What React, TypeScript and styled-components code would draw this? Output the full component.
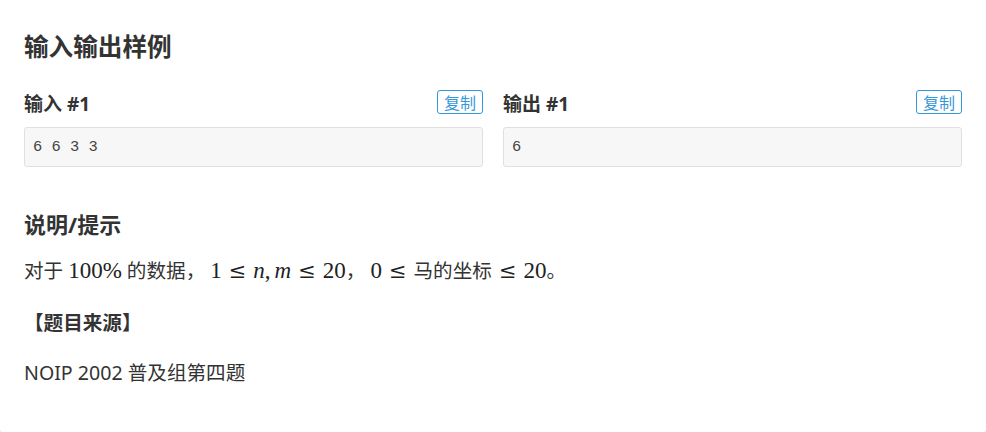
import styled, { createGlobalStyle } from "styled-components";

const GlobalStyle = createGlobalStyle`
  html, body {
    margin: 0;
    padding: 0;
    background: #efefef;
  }
  body {
    font-family: "Noto Sans", "Noto Sans CJK SC", sans-serif;
    color: #333;
  }
`;

const Card = styled.div`
  box-sizing: border-box;
  width: 986px;
  height: 432px;
  padding: 32px 24px 0;
  background: #fff;
  border-radius: 0 0 4px 4px;
`;

const Title = styled.h2`
  margin: 0;
  font-size: 24.6px;
  line-height: 30px;
  font-weight: 700;
  color: #333;
`;

const SampleGrid = styled.div`
  display: grid;
  grid-template-columns: 1fr 1fr;
  column-gap: 20px;
  margin-top: 28px;
`;

const Sample = styled.div`
  display: flex;
  flex-direction: column;
`;

const SampleHead = styled.div`
  display: flex;
  align-items: center;
  justify-content: space-between;
  height: 24px;
`;

const SampleTitle = styled.h3`
  margin: 0;
  padding-top: 3px;
  font-size: 19px;
  line-height: 24px;
  font-weight: 700;
  color: #333;
`;

const CopyButton = styled.button`
  box-sizing: border-box;
  height: 24px;
  padding: 0 6px;
  border: 1px solid #3498db;
  border-radius: 3px;
  background: #fff;
  color: #3498db;
  font-family: "Noto Sans CJK SC", sans-serif;
  font-size: 16px;
  line-height: 22px;
  cursor: pointer;
`;

const Pre = styled.pre`
  box-sizing: border-box;
  margin: 13px 0 0;
  height: 40px;
  padding: 0 8px;
  display: flex;
  align-items: center;
  background: #f7f7f7;
  border: 1px solid #e0e0e0;
  border-radius: 3px;
  font-family: "Liberation Mono", monospace;
  font-size: 15.4px;
  color: #444;
`;

const SubTitle = styled.h3`
  margin: 43px 0 0;
  font-size: 22px;
  line-height: 28px;
  font-weight: 700;
  color: #333;
`;

const Para = styled.p<{ $gap: number; $bold?: boolean }>`
  margin: ${(p) => p.$gap}px 0 0;
  font-size: 19.6px;
  line-height: 28px;
  font-weight: ${(p) => (p.$bold ? 700 : 400)};
  color: #333;
`;

const Math = styled.span<{ $l?: number; $r?: number }>`
  font-family: "Liberation Serif", "DejaVu Serif", serif;
  font-size: 23px;
  color: #222;
  margin: 0 ${(p) => p.$r ?? 5}px 0 ${(p) => p.$l ?? 5}px;
`;

const Rel = styled.span`
  font-family: "DejaVu Serif", serif;
  font-size: 21px;
  margin: 0 7px;
`;

const Var = styled.i<{ $gap?: number }>`
  font-style: italic;
  margin-left: ${(p) => p.$gap ?? 0}px;
`;

const samples = [
  { name: "输入 #1", data: "6 6 3 3" },
  { name: "输出 #1", data: "6" },
];

export default function App() {
  return (
    <>
      <GlobalStyle />
      <Card>
        <Title>输入输出样例</Title>
        <SampleGrid>
          {samples.map((s) => (
            <Sample key={s.name}>
              <SampleHead>
                <SampleTitle>{s.name}</SampleTitle>
                <CopyButton>复制</CopyButton>
              </SampleHead>
              <Pre>{s.data}</Pre>
            </Sample>
          ))}
        </SampleGrid>
        <SubTitle>说明/提示</SubTitle>
        <Para $gap={19}>
          对于<Math>100%</Math>的数据，<Math $r={0}>1<Rel>≤</Rel><Var>n</Var>,<Var $gap={4}>m</Var><Rel>≤</Rel>20</Math>，<Math $r={0}>0<Rel>≤</Rel></Math>马的坐标<Math $l={0} $r={0}><Rel>≤</Rel>20</Math>。
        </Para>
        <Para $gap={24} $bold>
          【题目来源】
        </Para>
        <Para $gap={22}>NOIP 2002 普及组第四题</Para>
      </Card>
    </>
  );
}
